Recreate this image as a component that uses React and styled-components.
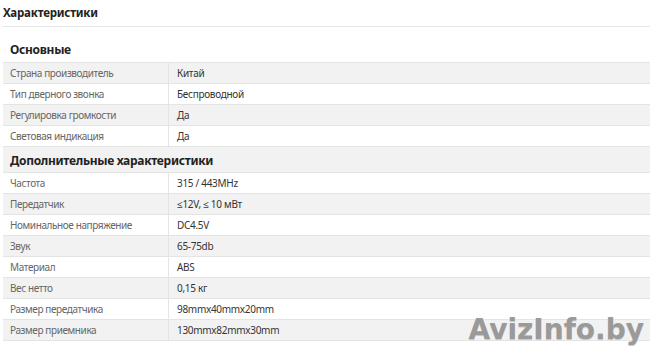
import React from 'react';
import styled, { createGlobalStyle } from 'styled-components';

const GlobalStyle = createGlobalStyle`
  html, body {
    margin: 0;
    padding: 0;
    background: #fff;
  }
  body {
    font-family: 'Noto Sans', 'Open Sans', sans-serif;
  }
`;

const groups = [
  {
    title: 'Основные',
    rows: [
      ['Страна производитель', 'Китай'],
      ['Тип дверного звонка', 'Беспроводной'],
      ['Регулировка громкости', 'Да'],
      ['Световая индикация', 'Да'],
    ],
  },
  {
    title: 'Дополнительные характеристики',
    rows: [
      ['Частота', '315 / 443MHz'],
      ['Передатчик', '≤12V, ≤ 10 мВт'],
      ['Номинальное напряжение', 'DC4.5V'],
      ['Звук', '65-75db'],
      ['Материал', 'ABS'],
      ['Вес нетто', '0,15 кг'],
      ['Размер передатчика', '98mmx40mmx20mm'],
      ['Размер приемника', '130mmx82mmx30mm'],
    ],
  },
];

export default function App() {
  return (
    <>
      <GlobalStyle />
      <Page>
        <Title>Характеристики</Title>
        <Specs>
          <tbody>
            {groups.map((group) => (
              <React.Fragment key={group.title}>
                <GroupRow>
                  <th colSpan={2}>{group.title}</th>
                </GroupRow>
                {group.rows.map(([name, value]) => (
                  <SpecRow key={name}>
                    <td>{name}</td>
                    <td>{value}</td>
                  </SpecRow>
                ))}
              </React.Fragment>
            ))}
          </tbody>
        </Specs>
        <Watermark>AvizInfo.by</Watermark>
      </Page>
    </>
  );
}

const Page = styled.div`
  position: relative;
  width: 647px;
  height: 347px;
  padding-left: 3px;
  overflow: hidden;
`;

const Title = styled.h2`
  margin: 0;
  padding: 3px 0 0;
  height: 23px;
  font-size: 11.5px;
  font-weight: 700;
  letter-spacing: -0.2px;
  line-height: 19px;
  color: #222;
  border-bottom: 1px solid #e6e6e6;
`;

const Specs = styled.table`
  width: 647px;
  margin-top: 9px;
  border-collapse: collapse;
  font-size: 10px;

  & tr:nth-child(even) {
    background: #f2f2f2;
  }
`;

const GroupRow = styled.tr`
  height: 26px;
  & th {
    padding: 2px 7px 0;
    text-align: left;
    font-size: 12px;
    font-weight: 700;
    letter-spacing: -0.3px;
    color: #222;
  }
`;

const SpecRow = styled.tr`
  height: 21px;
  border-top: 1px solid #e4e4e4;
  border-bottom: 1px solid #e4e4e4;

  & td {
    padding: 0 8px;
    line-height: 20px;
    letter-spacing: -0.3px;
  }
  & td:first-child {
    width: 150px;
    padding-left: 7px;
    color: #666;
    letter-spacing: -0.4px;
    border-right: 1px solid #e4e4e4;
  }
  & td:last-child {
    color: #333;
  }
`;

const Watermark = styled.div`
  position: absolute;
  right: 6px;
  bottom: 1px;
  font-family: 'DejaVu Sans', Verdana, sans-serif;
  font-weight: 700;
  font-size: 28px;
  color: #9a9a9a;
  text-shadow: 0 1px 0 #c8c8c8;
`;
